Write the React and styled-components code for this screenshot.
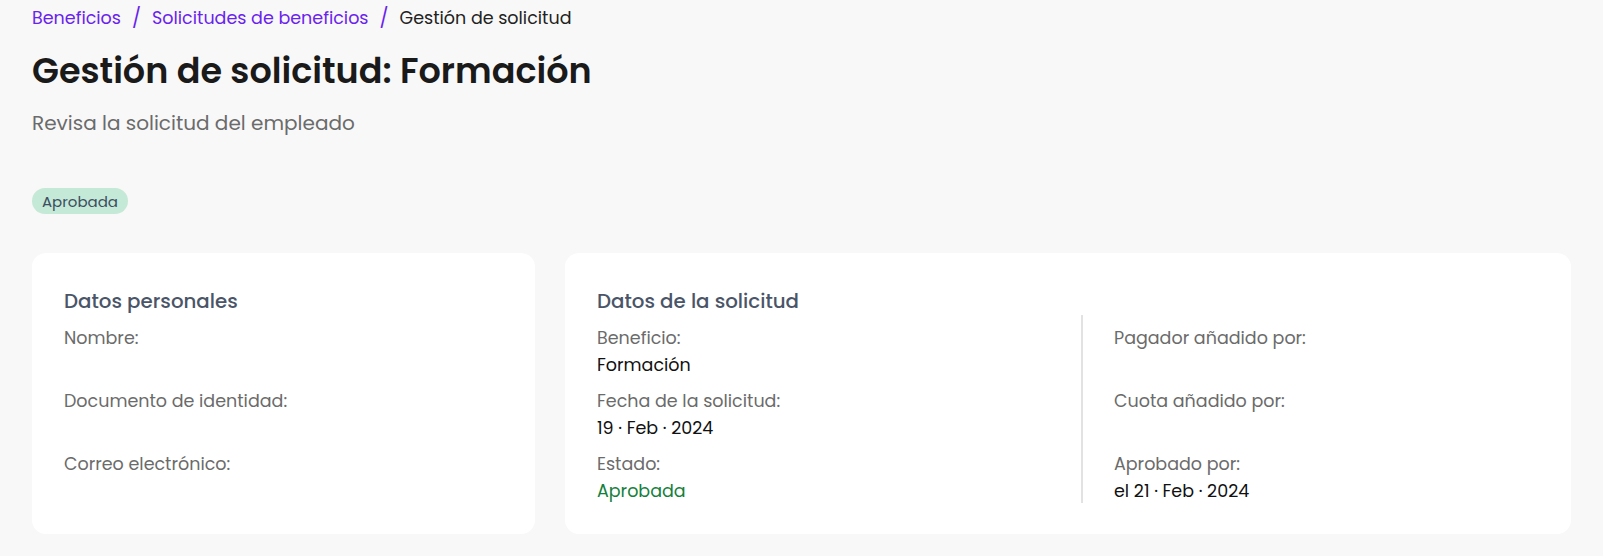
import React from "react";
import styled, { createGlobalStyle } from "styled-components";

const GlobalStyle = createGlobalStyle`
  html, body {
    margin: 0;
    padding: 0;
    background-color: #f8f8f8;
  }
  body {
    font-family: "Poppins", "Inter", "Noto Sans", sans-serif;
    color: #1a1a1a;
  }
  * {
    box-sizing: border-box;
  }
`;

const personalFields = [
  { label: "Nombre:", value: "" },
  { label: "Documento de identidad:", value: "" },
  { label: "Correo electrónico:", value: "" },
];

const requestFields = [
  { label: "Beneficio:", value: "Formación" },
  { label: "Fecha de la solicitud:", value: "19 · Feb · 2024" },
  { label: "Estado:", value: "Aprobada", status: true },
];

const approvalFields = [
  { label: "Pagador añadido por:", value: "" },
  { label: "Cuota añadido por:", value: "" },
  { label: "Aprobado por:", value: "el 21 · Feb · 2024" },
];

const Field = ({ label, value, status }) => (
  <FieldBox>
    <FieldLabel>{label}</FieldLabel>
    <FieldValue $status={status}>{value}</FieldValue>
  </FieldBox>
);

const App = () => {
  return (
    <>
      <GlobalStyle />
      <PageDiv>
        <Breadcrumbs>
          <CrumbLink href="#">Beneficios</CrumbLink>
          <CrumbSeparator>/</CrumbSeparator>
          <CrumbLink href="#">Solicitudes de beneficios</CrumbLink>
          <CrumbSeparator>/</CrumbSeparator>
          <CrumbCurrent>Gestión de solicitud</CrumbCurrent>
        </Breadcrumbs>

        <PageTitle>Gestión de solicitud: Formación</PageTitle>
        <PageSubtitle>Revisa la solicitud del empleado</PageSubtitle>

        <StatusBadge>Aprobada</StatusBadge>

        <CardsGrid>
          <Card>
            <CardTitle>Datos personales</CardTitle>
            <FieldList>
              {personalFields.map((f) => (
                <Field key={f.label} {...f} />
              ))}
            </FieldList>
          </Card>

          <Card>
            <CardTitle>Datos de la solicitud</CardTitle>
            <Columns>
              <FieldList>
                {requestFields.map((f) => (
                  <Field key={f.label} {...f} />
                ))}
              </FieldList>
              <FieldList $divider>
                {approvalFields.map((f) => (
                  <Field key={f.label} {...f} />
                ))}
              </FieldList>
            </Columns>
          </Card>
        </CardsGrid>
      </PageDiv>
    </>
  );
};

const PageDiv = styled.div`
  padding: 6px 32px 22px 32px;
  display: flex;
  flex-direction: column;
  align-items: flex-start;
`;

const Breadcrumbs = styled.nav`
  display: flex;
  align-items: center;
  gap: 11px;
  font-size: 17.5px;
  line-height: 25px;
`;

const CrumbLink = styled.a`
  color: #6a22ee;
  text-decoration: none;
`;

const CrumbSeparator = styled.span`
  color: #6a22ee;
  font-size: 19px;
`;

const CrumbCurrent = styled.span`
  color: #222222;
`;

const PageTitle = styled.h1`
  margin: 16px 0 0 0;
  font-size: 35px;
  line-height: 48px;
  font-weight: 600;
  color: #1a1a1a;
`;

const PageSubtitle = styled.p`
  margin: 15px 0 0 0;
  font-size: 20px;
  line-height: 27px;
  color: #6b6b6b;
`;

const StatusBadge = styled.span`
  margin-top: 51px;
  padding: 0 10px;
  height: 26px;
  display: inline-flex;
  align-items: center;
  border-radius: 13px;
  background-color: #c4e9d6;
  color: #3d4e62;
  font-size: 15px;
`;

const CardsGrid = styled.div`
  margin-top: 39px;
  width: 100%;
  display: grid;
  grid-template-columns: 1fr 2fr;
  gap: 30px;
`;

const Card = styled.section`
  background-color: #ffffff;
  border-radius: 14px;
  padding: 34px 32px 31px 32px;
`;

const CardTitle = styled.h2`
  margin: 0;
  font-size: 19.8px;
  line-height: 28px;
  font-weight: 500;
  color: #4a5568;
`;

const Columns = styled.div`
  display: grid;
  grid-template-columns: 1fr 1fr;
  gap: 26px;
`;

const FieldList = styled.div`
  display: flex;
  flex-direction: column;
  gap: 12px;
  padding-top: 11px;
  ${(p) =>
    p.$divider &&
    `
    border-left: 2px solid #e2e2e2;
    padding-left: 31px;
  `}
`;

const FieldBox = styled.div`
  display: flex;
  flex-direction: column;
  gap: 3px;
`;

const FieldLabel = styled.span`
  font-size: 17.5px;
  line-height: 24px;
  color: #6b6b6b;
`;

const FieldValue = styled.span`
  font-size: 17.5px;
  line-height: 24px;
  min-height: 24px;
  color: ${(p) => (p.$status ? "#15803d" : "#111111")};
`;

export default App;
